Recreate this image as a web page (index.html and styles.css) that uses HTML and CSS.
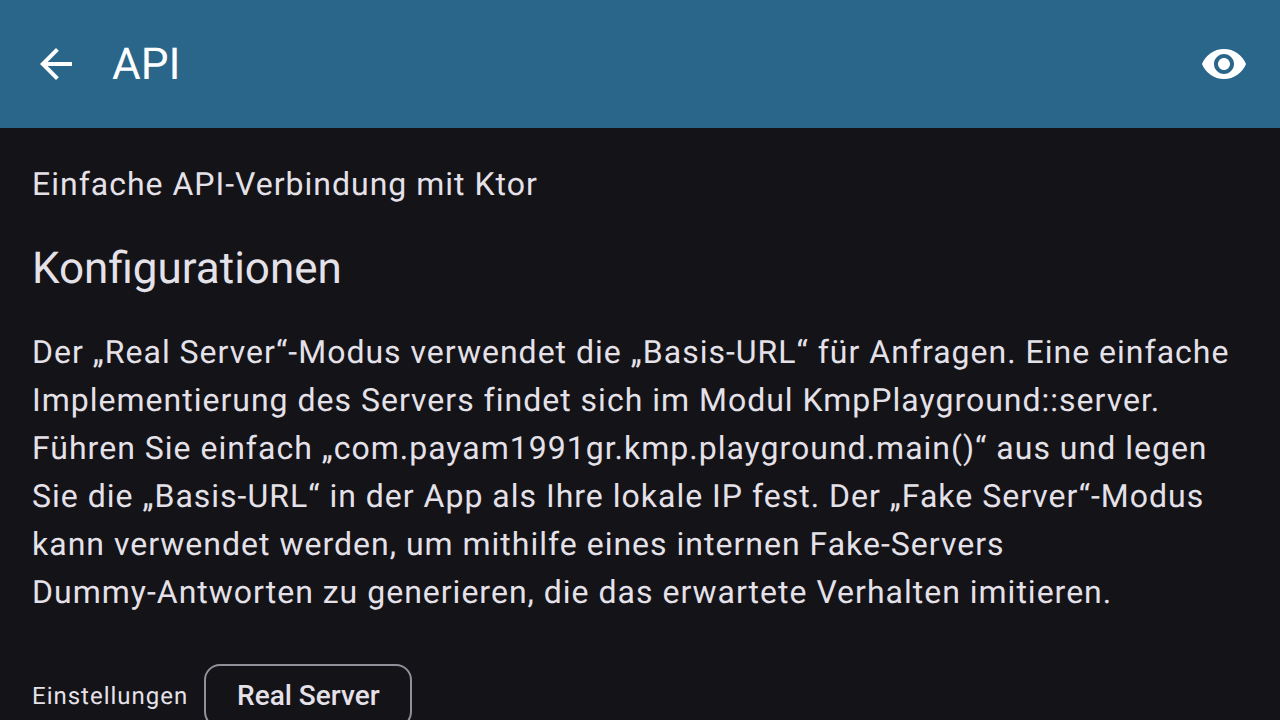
FILE: index.html
```html
<!DOCTYPE html>
<html lang="de">
<head>
<meta charset="utf-8">
<meta name="viewport" content="width=device-width, initial-scale=1">
<title>API</title>
<link rel="stylesheet" href="styles.css">
</head>
<body>
<header class="app-bar">
  <button class="icon-button" type="button" aria-label="Zurück">
    <svg class="icon" viewBox="0 0 24 24" aria-hidden="true"><path d="M20 11H7.83l5.59-5.59L12 4l-8 8 8 8 1.41-1.41L7.83 13H20v-2z"/></svg>
  </button>
  <h1 class="app-bar-title">API</h1>
  <button class="icon-button" type="button" aria-label="Anzeigen">
    <svg class="icon" viewBox="0 0 24 24" aria-hidden="true"><path d="M12 4.5C7 4.5 2.73 7.61 1 12c1.730 4.390 6 7.500 11 7.500s9.270-3.110 11-7.500c-1.730-4.390-6-7.500-11-7.500zM12 17c-2.760 0-5-2.240-5-5s2.240-5 5-5 5 2.240 5 5-2.240 5-5 5zm0-8c-1.660 0-3 1.340-3 3s1.340 3 3 3 3-1.340 3-3-1.340-3-3-3z"/></svg>
  </button>
</header>
<main class="content">
  <p class="body-text">Einfache API-Verbindung mit Ktor</p>
  <h2 class="section-title">Konfigurationen</h2>
  <p class="body-text">Der „Real Server“-Modus verwendet die „Basis-URL“ für Anfragen. Eine einfache Implementierung des Servers findet sich im Modul KmpPlayground::server. Führen Sie einfach „com.payam1991gr.kmp.playground.main()“ aus und legen Sie die „Basis-URL“ in der App als Ihre lokale IP fest. Der „Fake Server“-Modus kann verwendet werden, um mithilfe eines internen Fake-Servers <span class="keep">Dummy-Antworten</span> zu generieren, die das erwartete Verhalten imitieren.</p>
  <div class="setting-row">
    <span class="setting-label" id="settings-label">Einstellungen</span>
    <button class="outlined-button" type="button" aria-describedby="settings-label">Real Server</button>
  </div>
</main>
</body>
</html>
```

FILE: styles.css
```css
* { box-sizing: border-box; }
html { background: #141318; }
body {
  margin: 0;
  height: 100vh;
  overflow: hidden;
  display: flex;
  flex-direction: column;
  background: #141318;
  color: #e5e1e9;
  font-family: Roboto, "Liberation Sans", sans-serif;
  text-rendering: geometricPrecision;
}
h1, h2, p { margin: 0; font-weight: 400; }
button { font: inherit; color: inherit; cursor: pointer; }
.app-bar {
  flex: none;
  display: flex;
  align-items: center;
  height: 128px;
  padding: 0 8px;
  background: #29668a;
  color: #fff;
}
.icon-button {
  display: grid;
  place-items: center;
  width: 96px;
  height: 96px;
  padding: 0;
  border: 0;
  border-radius: 50%;
  background: none;
}
.icon { width: 48px; height: 48px; fill: currentColor; }
.app-bar-title {
  flex: 1;
  padding-left: 8px;
  font-size: 44px;
  line-height: 56px;
}
.content {
  flex: 1;
  min-height: 0;
  display: flex;
  flex-direction: column;
  gap: 32px;
  padding: 32px;
}
.body-text { font-size: 32px; line-height: 48px; letter-spacing: 1px; }
.keep { white-space: nowrap; }
.section-title { font-size: 44px; line-height: 56px; }
.setting-row { display: flex; align-items: center; gap: 16px; padding-top: 16px; }
.setting-label { font-size: 24px; line-height: 32px; letter-spacing: 1px; }
.outlined-button {
  min-width: 208px;
  height: 64px;
  padding: 0 30px;
  border: 2px solid #928f99;
  border-radius: 16px;
  background: none;
  font-size: 28px;
  font-weight: 500;
  line-height: 40px;
}
```
